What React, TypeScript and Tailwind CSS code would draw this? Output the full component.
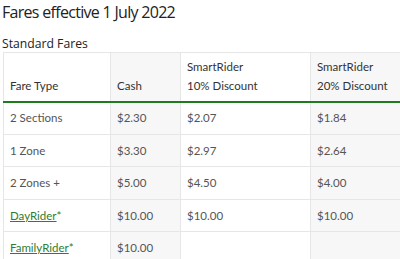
import React from "react";

const rows: { type: string; link?: boolean; cash: string; d10: string; d20: string }[] = [
  { type: "2 Sections", cash: "$2.30", d10: "$2.07", d20: "$1.84" },
  { type: "1 Zone", cash: "$3.30", d10: "$2.97", d20: "$2.64" },
  { type: "2 Zones +", cash: "$5.00", d10: "$4.50", d20: "$4.00" },
  { type: "DayRider", link: true, cash: "$10.00", d10: "$10.00", d20: "$10.00" },
  { type: "FamilyRider", link: true, cash: "$10.00", d10: "", d20: "" },
];

export default function App() {
  return (
    <div className="w-[400px] h-[259px] overflow-hidden bg-white">
      <h1
        className="pl-[2px] pt-[1px] text-[16px] tracking-[-0.7px] leading-[22px] text-[#222]"
        style={{ fontFamily: '"Open Sans", "Noto Sans", sans-serif' }}
      >
        Fares effective 1 July 2022
      </h1>
      <h2
        className="pl-[2px] mt-[12px] text-[12.2px] leading-[17px] text-[#222]"
        style={{ fontFamily: '"Open Sans", "Noto Sans", sans-serif' }}
      >
        Standard Fares
      </h2>
      <div className="ml-[3px] w-[420px]" style={{ fontFamily: "Lato, sans-serif" }}>
        <table className="border-collapse table-fixed w-[420px] text-[11.5px]">
          <colgroup>
            <col className="w-[107px]" />
            <col className="w-[70px]" />
            <col className="w-[130px]" />
            <col className="w-[113px]" />
          </colgroup>
          <thead>
            <tr className="h-[49px] text-[#333]">
              <th className="border border-[#e6e6e6] border-b-[#1e7b1e] border-b-2 align-bottom text-left font-normal px-[6px] pb-[6px] leading-[19px]">
                Fare Type
              </th>
              <th className="border border-[#e6e6e6] border-b-[#1e7b1e] border-b-2 bg-[#f7f7f7] align-bottom text-left font-normal px-[6px] pb-[6px] leading-[19px]">
                Cash
              </th>
              <th className="border border-[#e6e6e6] border-b-[#1e7b1e] border-b-2 align-bottom text-left font-normal px-[6px] pb-[6px] leading-[19px]">
                SmartRider
                <br />
                10% Discount
              </th>
              <th className="border border-[#e6e6e6] border-b-[#1e7b1e] border-b-2 bg-[#f7f7f7] align-bottom text-left font-normal px-[6px] pb-[6px] leading-[19px]">
                SmartRider
                <br />
                20% Discount
              </th>
            </tr>
          </thead>
          <tbody className="text-[#555]">
            {rows.map((r) => (
              <tr key={r.type} className="h-[32.5px]">
                <td className="border border-[#e6e6e6] px-[6px] align-middle">
                  {r.link ? (
                    <>
                      <span className="text-[#2e7d32] underline">{r.type}</span>
                      <span className="text-[#2e7d32]">*</span>
                    </>
                  ) : (
                    r.type
                  )}
                </td>
                <td className="border border-[#e6e6e6] bg-[#f7f7f7] px-[6px] align-middle">{r.cash}</td>
                <td className="border border-[#e6e6e6] px-[6px] align-middle">{r.d10}</td>
                <td className="border border-[#e6e6e6] bg-[#f7f7f7] px-[6px] align-middle">{r.d20}</td>
              </tr>
            ))}
          </tbody>
        </table>
      </div>
    </div>
  );
}
